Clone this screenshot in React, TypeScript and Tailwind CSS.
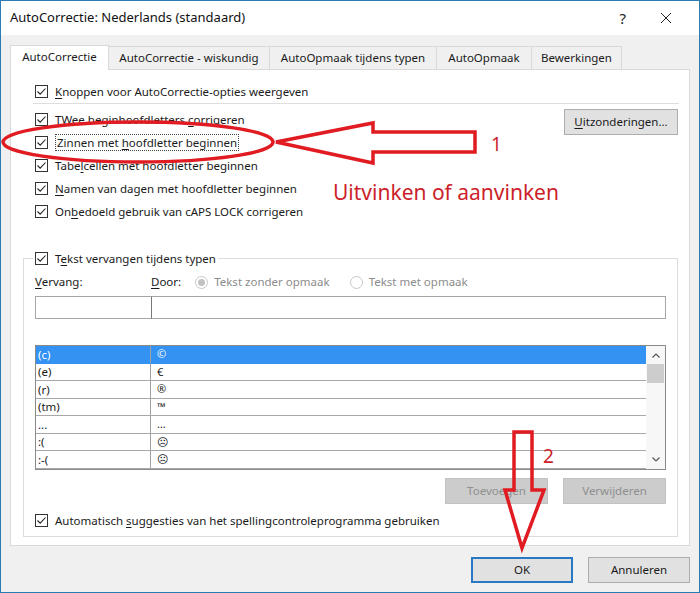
import React from 'react';

const FONT = { fontFamily: '"Noto Sans", "Open Sans", sans-serif' };

const Check: React.FC<{ checked?: boolean }> = ({ checked = true }) => (
  <span className="w-[13px] h-[13px] border border-[#333] bg-white flex items-center justify-center shrink-0">
    {checked && (
      <svg width="11" height="11" viewBox="0 0 11 11">
        <path d="M1.5 5.5 L4.2 8.2 L9.5 2.5" fill="none" stroke="#222" strokeWidth="1.1" />
      </svg>
    )}
  </span>
);

const U: React.FC<{ children: React.ReactNode }> = ({ children }) => <span className="underline underline-offset-2">{children}</span>;

const CheckRow: React.FC<{ children: React.ReactNode; focus?: boolean }> = ({ children, focus }) => (
  <div className="h-[23px] flex items-center gap-[7px]">
    <Check />
    <span className={focus ? 'border border-dotted border-[#444] px-[1px] leading-[15px]' : ''}>{children}</span>
  </div>
);

const Radio: React.FC<{ on?: boolean }> = ({ on }) => (
  <span className="w-[13px] h-[13px] rounded-full border border-[#c8c8c8] bg-white flex items-center justify-center shrink-0">
    {on && <span className="w-[7px] h-[7px] rounded-full bg-[#c2c2c2]" />}
  </span>
);

const rows: [string, string][] = [
  ['(c)', '©'],
  ['(e)', '€'],
  ['(r)', '®'],
  ['(tm)', '™'],
  ['...', '…'],
  [':(', '☹'],
  [':-(', '☹'],
];

const tabs = [
  { label: 'AutoCorrectie - wiskundig', w: 'w-[161px]' },
  { label: 'AutoOpmaak tijdens typen', w: 'w-[167px]' },
  { label: 'AutoOpmaak', w: 'w-[95px]' },
  { label: 'Bewerkingen', w: 'w-[90px]' },
];

export default function App() {
  return (
    <div className="relative w-[700px] h-[593px] border border-[#2d7bb5] bg-[#f0f0f0] flex flex-col text-[11.5px] text-[#1a1a1a]" style={FONT}>
      {/* title bar */}
      <div className="h-[34px] bg-white flex items-center pl-[9px] shrink-0">
        <span className="text-[13px] text-[#111] flex-1">AutoCorrectie: Nederlands (standaard)</span>
        <span className="text-[15px] text-[#222] mr-[34px]">?</span>
        <svg width="12" height="12" viewBox="0 0 12 12" className="mr-[27px]">
          <path d="M1 1 L11 11 M11 1 L1 11" stroke="#222" strokeWidth="1" />
        </svg>
      </div>

      <div className="flex flex-col px-[9px] pt-[9px]">
        {/* tabs */}
        <div className="flex items-end h-[25px]">
          <div className="w-[99px] h-[25px] bg-white border border-[#d9d9d9] border-b-0 flex items-center justify-center relative z-10 -mb-px pb-[2px]">AutoCorrectie</div>
          {tabs.map((t) => (
            <div key={t.label} className={`${t.w} h-[23px] bg-[#f0f0f0] border border-[#d9d9d9] border-l-0 border-b-0 flex items-center justify-center`}>
              {t.label}
            </div>
          ))}
        </div>

        {/* panel */}
        <div className="h-[477px] bg-white border border-[#d9d9d9] flex flex-col pt-[10px]">
          <div className="pl-[24px]">
            <CheckRow><U>K</U>noppen voor AutoCorrectie-opties weergeven</CheckRow>
          </div>
          <div className="h-px bg-[#dedede] ml-[22px] mr-[10px]" />
          <div className="flex pl-[24px] pr-[11px] mt-[4px]">
            <div className="flex-1 flex flex-col">
              <CheckRow>TWee beginhoofdletters <U>c</U>orrigeren</CheckRow>
              <CheckRow focus>Zinnen met <U>h</U>oofdletter beginnen</CheckRow>
              <CheckRow>Tabe<U>l</U>cellen met hoofdletter beginnen</CheckRow>
              <CheckRow><U>N</U>amen van dagen met hoofdletter beginnen</CheckRow>
              <CheckRow>On<U>b</U>edoeld gebruik van cAPS LOCK corrigeren</CheckRow>
            </div>
            <button className="w-[114px] h-[26px] mt-[1px] bg-[#e1e1e1] border border-[#adadad] text-[11.5px] text-[#1a1a1a]">
              <U>U</U>itzonderingen...
            </button>
          </div>

          {/* group box */}
          <div className="ml-[12px] mr-[11px] mt-[35px] h-[279px] border border-[#dcdcdc] flex flex-col pl-[11px] pr-[11px]">
            <div className="-mt-[12px] -ml-[2px] self-start bg-white px-[2px]">
              <CheckRow>T<U>e</U>kst vervangen tijdens typen</CheckRow>
            </div>
            <div className="h-[20px] mt-[2px] flex items-center">
              <span className="w-[116px]"><U>V</U>ervang:</span>
              <span><U>D</U>oor:</span>
              <span className="ml-[14px] flex items-center gap-[6px] text-[#8c8c8c]"><Radio on />Tekst zonder opmaak</span>
              <span className="ml-[20px] flex items-center gap-[6px] text-[#8c8c8c]"><Radio />Tekst met opmaak</span>
            </div>
            <div className="flex h-[23px] mt-[4px]">
              <div className="w-[117px] border border-[#a6a6a6] bg-white" />
              <div className="flex-1 border border-[#a6a6a6] border-l-[#777] bg-white -ml-px" />
            </div>

            {/* list */}
            <div className="h-[125px] mt-[26px] border border-[#8a8a8a] flex bg-white">
              <div className="flex-1 flex flex-col">
                {rows.map(([a, b], i) => (
                  <div
                    key={a}
                    className={`h-[17.5px] flex items-center border-b ${i === 0 ? 'bg-[#3392f2] text-white border-[#3392f2]' : 'border-[#a8a8a8]'}`}
                  >
                    <span className="w-[115px] h-full flex items-center pl-[2px] border-r border-[#a0a0a0] text-[11.5px]">{a}</span>
                    <span className="pl-[6px] text-[11px]">{b}</span>
                  </div>
                ))}
              </div>
              <div className="w-[19px] bg-[#f7f7f7] flex flex-col items-center">
                <svg width="10" height="17" viewBox="0 0 10 17" className="mt-[1px]">
                  <path d="M1.5 10.5 L5 7 L8.5 10.5" fill="none" stroke="#555" strokeWidth="1.2" />
                </svg>
                <div className="w-[17px] h-[19px] bg-[#cdcdcd]" />
                <div className="flex-1" />
                <svg width="10" height="17" viewBox="0 0 10 17" className="mb-[1px]">
                  <path d="M1.5 6.5 L5 10 L8.5 6.5" fill="none" stroke="#555" strokeWidth="1.2" />
                </svg>
              </div>
            </div>

            <div className="flex justify-end gap-[15px] mt-[8px]">
              <div className="w-[103px] h-[26px] bg-[#cccccc] border border-[#c2c2c2] flex items-center justify-center text-[#8f8f8f]">Toevoegen</div>
              <div className="w-[103px] h-[26px] bg-[#cccccc] border border-[#c2c2c2] flex items-center justify-center text-[#8f8f8f]">Verwijderen</div>
            </div>
            <div className="mt-[5px]">
              <CheckRow>Automatisch <U>s</U>uggesties van het spellingcontroleprogramma gebruiken</CheckRow>
            </div>
          </div>
        </div>

        {/* dialog buttons */}
        <div className="flex justify-end gap-[15px] mt-[11px]">
          <div className="w-[102px] h-[26px] bg-[#e1e1e1] border-2 border-[#2a78c4] flex items-center justify-center">OK</div>
          <div className="w-[102px] h-[26px] bg-[#e1e1e1] border border-[#adadad] flex items-center justify-center">Annuleren</div>
        </div>
      </div>

      {/* red annotations */}
      <svg className="absolute left-[-1px] top-[-1px] pointer-events-none" width="700" height="593" viewBox="0 0 700 593">
        <ellipse cx="138" cy="142" rx="135" ry="20" fill="none" stroke="#e11b22" strokeWidth="3.5" />
        <polygon points="276,142 373,123 373,132 475,132 475,152 373,152 373,163" fill="none" stroke="#e11b22" strokeWidth="3.5" strokeLinejoin="miter" />
        <polygon points="514,432 532,432 532,490 544,490 522,548 505,490 514,490" fill="none" stroke="#e11b22" strokeWidth="3.5" strokeLinejoin="miter" />
      </svg>
      <span className="absolute left-[490px] top-[129px] text-[19px] text-[#cc1f2b]">1</span>
      <span className="absolute left-[542px] top-[441px] text-[19px] text-[#cc1f2b]">2</span>
      <span className="absolute left-[332px] top-[176px] text-[21px] text-[#cc1f2b]">Uitvinken of aanvinken</span>
    </div>
  );
}
